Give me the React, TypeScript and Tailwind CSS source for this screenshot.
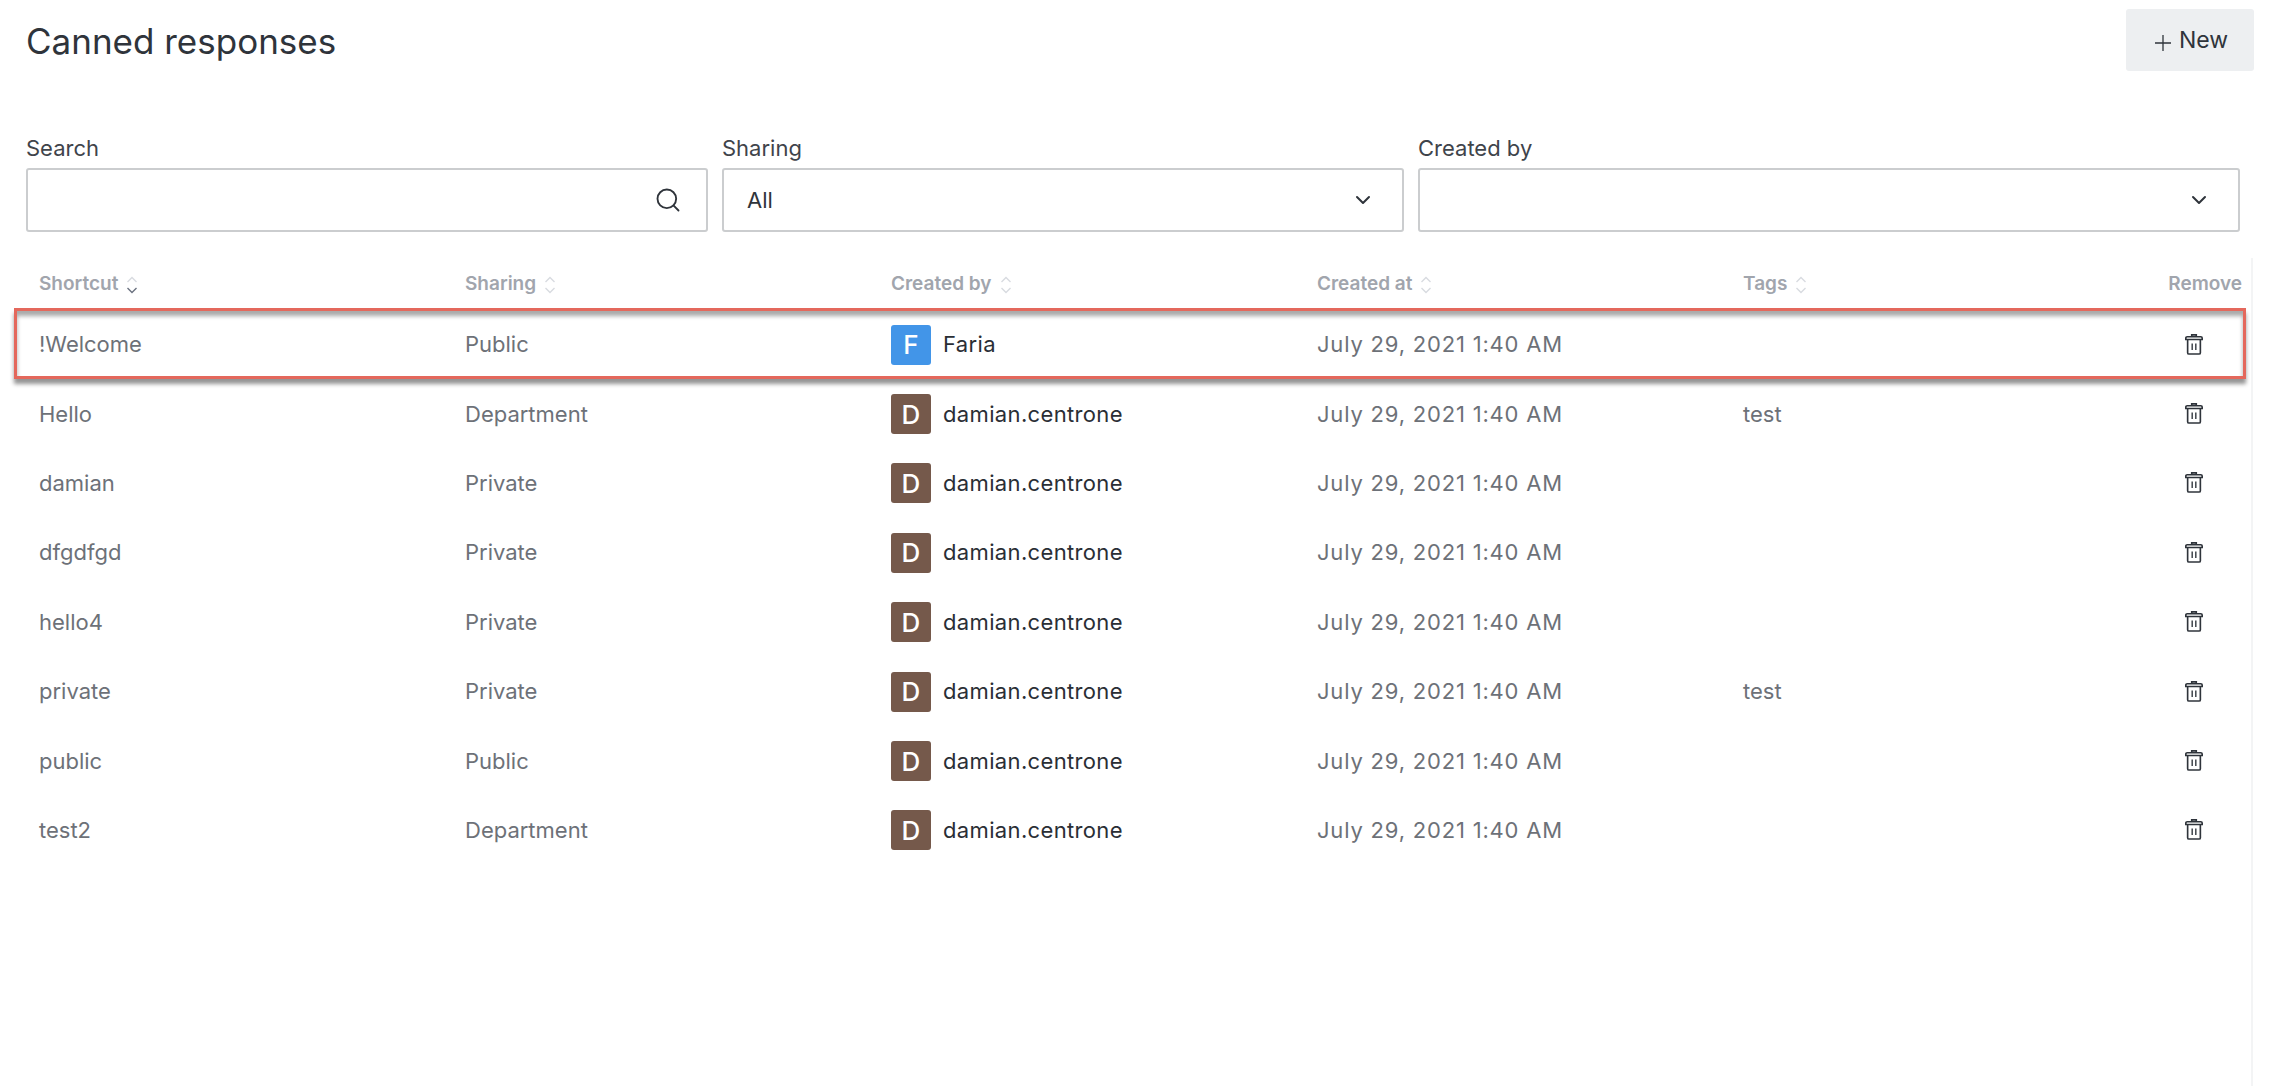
import { ChevronDown, Search } from "lucide-react";

const rows = [
  { shortcut: "!Welcome", sharing: "Public", user: "Faria", tags: "" },
  { shortcut: "Hello", sharing: "Department", user: "damian.centrone", tags: "test" },
  { shortcut: "damian", sharing: "Private", user: "damian.centrone", tags: "" },
  { shortcut: "dfgdfgd", sharing: "Private", user: "damian.centrone", tags: "" },
  { shortcut: "hello4", sharing: "Private", user: "damian.centrone", tags: "" },
  { shortcut: "private", sharing: "Private", user: "damian.centrone", tags: "test" },
  { shortcut: "public", sharing: "Public", user: "damian.centrone", tags: "" },
  { shortcut: "test2", sharing: "Department", user: "damian.centrone", tags: "" },
];

const gridCols = "grid grid-cols-[426px_426px_426px_426px_1fr_120px] items-center";

function SortIcon({ active }: { active?: boolean }) {
  return (
    <svg width="14" height="20" viewBox="0 0 14 20" fill="none" strokeWidth="1.4" className="ml-[7px] mt-0.5">
      <path d="M2.5 7 7 2.5 11.5 7" stroke="#d8dbe0" />
      <path d="M2.5 13 7 17.5 11.5 13" stroke={active ? "#6b7280" : "#d8dbe0"} />
    </svg>
  );
}

function TrashIcon() {
  return (
    <svg width="20" height="24" viewBox="0 0 22 26" fill="none" stroke="#2f343b" strokeWidth="1.8" className="-mt-[2px]">
      <path d="M2 8V6.500C2 5.700 2.700 5 3.500 5h15c.8 0 1.500.7 1.500 1.500V8Z" />
      <path d="M8.500 5V3h5v2" />
      <path d="M4 8v14.500c0 .8.7 1.500 1.500 1.500h11c.8 0 1.500-.7 1.500-1.500V8" />
      <path d="M9 12.500v7M13 12.500v7" strokeWidth="1.500" />
    </svg>
  );
}

function HeaderCell({ label, active }: { label: string; active?: boolean }) {
  return (
    <div className="flex items-center pl-3 text-[19px] font-semibold text-[#a1a5ad]">
      {label}
      <SortIcon active={active} />
    </div>
  );
}

function Field({ label, className, children }: { label: string; className: string; children?: React.ReactNode }) {
  return (
    <div className={className}>
      <div className="mb-[6px] text-[22px] leading-[27px] text-[#3f444b]">{label}</div>
      <div className="flex h-[64px] items-center justify-between rounded-[3px] border-2 border-[#cbcdcf] bg-white pl-[23px] pr-[27px] text-[22px] text-[#2f343b]">
        {children}
      </div>
    </div>
  );
}

export default function App() {
  return (
    <div className="flex min-h-[1086px] flex-col overflow-hidden bg-white font-['Inter','Liberation_Sans',sans-serif]">
      <div className="flex items-start justify-between pl-[26px] pr-[26px] pt-[9px]">
        <h1 className="pt-[10px] text-[35px] leading-[44px] font-normal text-[#2f343b]">Canned responses</h1>
        <button className="flex h-[62px] w-[128px] items-center justify-center gap-[8px] rounded-[3px] bg-[#edeff1] pl-[3px] text-[23px] text-[#2f343b]">
          <svg width="16" height="16" viewBox="0 0 16 16" stroke="#2f343b" strokeWidth="1.3" className="mt-1.5">
            <path d="M8 0v16M0 8h16" />
          </svg>
          New
        </button>
      </div>

      <div className="mt-[64px] flex gap-[14px] pl-[26px] pr-[40px]">
        <Field label="Search" className="w-[682px]">
          <span />
          <Search size={28} strokeWidth={1.6} className="-mr-[3px] text-[#2f343b]" />
        </Field>
        <Field label="Sharing" className="w-[682px]">
          <span>All</span>
          <ChevronDown size={24} strokeWidth={2} className="text-[#2f343b]" />
        </Field>
        <Field label="Created by" className="flex-1">
          <span />
          <ChevronDown size={24} strokeWidth={2} className="text-[#2f343b]" />
        </Field>
      </div>

      <div className="relative ml-[27px] mr-[27px] mt-[26px] flex-1 border-r-2 border-[#f3f4f5]">
        <div className={`${gridCols} h-[52px]`}>
          <HeaderCell label="Shortcut" active />
          <HeaderCell label="Sharing" />
          <HeaderCell label="Created by" />
          <HeaderCell label="Created at" />
          <HeaderCell label="Tags" />
          <div className="pr-[9px] text-right text-[19px] font-semibold text-[#a1a5ad]">Remove</div>
        </div>
        {rows.map((row, i) => (
          <div key={row.shortcut} className={`${gridCols} relative h-[69.4px] text-[22px] text-[#6d7178]`}>
            <div className="pl-3">{row.shortcut}</div>
            <div className="pl-3">{row.sharing}</div>
            <div className="flex items-center gap-3 pl-3 font-normal tracking-[0.35px] text-[#2a2e35]">
              <div
                className={`flex h-[40px] w-[40px] items-center justify-center rounded-[3px] text-[26px] font-medium tracking-normal text-white ${
                  i === 0 ? "bg-[#4295e8]" : "bg-[#75594b]"
                }`}
              >
                {row.user[0].toUpperCase()}
              </div>
              {row.user}
            </div>
            <div className="pl-3 tracking-[0.8px]">July 29, 2021 1:40 AM</div>
            <div className="pl-3">{row.tags}</div>
            <div className="flex justify-end pr-[47px]">
              <TrashIcon />
            </div>
            {i === 0 && (
              <div className="pointer-events-none absolute -left-[13px] right-[5px] -top-[2px] h-[71px] border-[3px] border-[#e4685c] shadow-[0_5px_4px_rgba(0,0,0,0.42),inset_0_5px_4px_rgba(0,0,0,0.34)]" />
            )}
          </div>
        ))}
      </div>
    </div>
  );
}
